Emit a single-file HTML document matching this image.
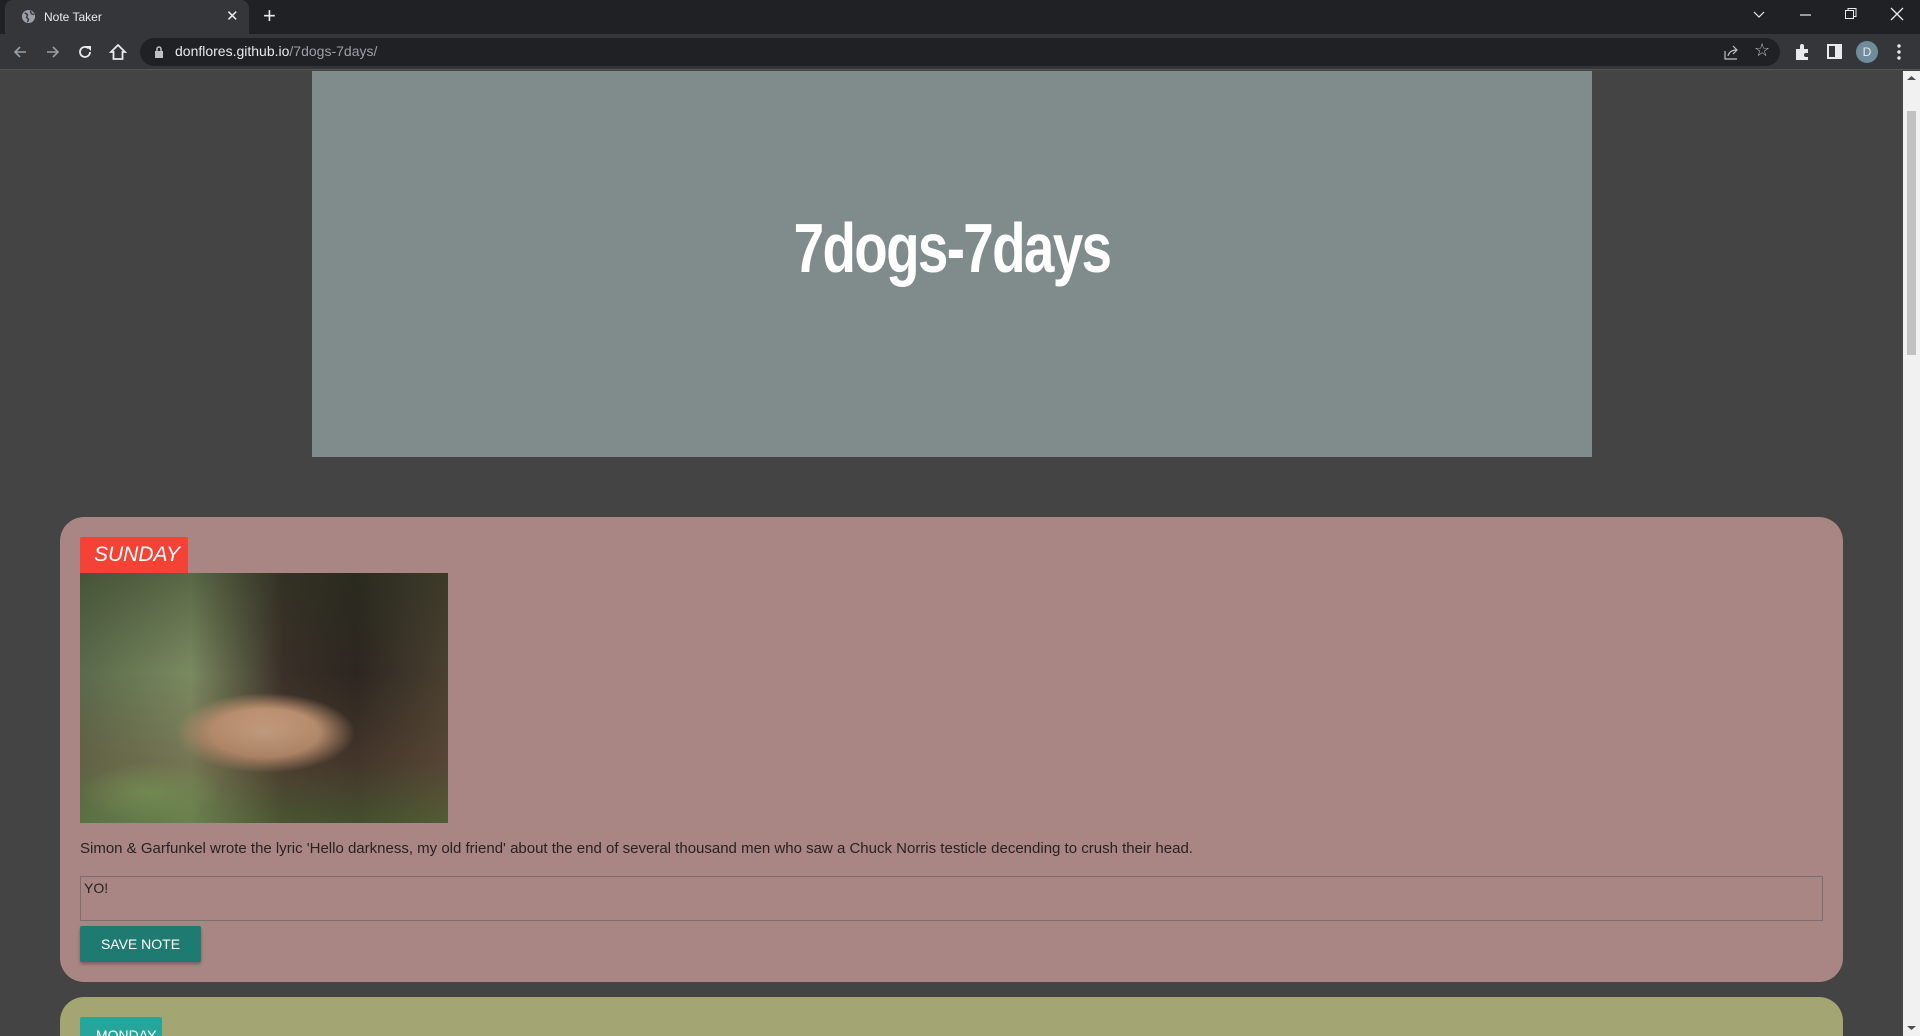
<!DOCTYPE html>
<html style="overflow:hidden;height:1036px"><head><meta charset="utf-8"><style>
*{box-sizing:border-box;margin:0;padding:0}
body{width:1920px;height:1036px;overflow:hidden;background:#444;font-family:"Liberation Sans",sans-serif;position:relative}
.tabbar{position:absolute;left:0;top:0;width:1920px;height:34px;background:#202124}
.tab{position:absolute;left:5px;top:0;width:244px;height:34px;background:#35363a;border-radius:8px 8px 0 0;color:#e8eaed;font-size:12px}
.toolbar{position:absolute;left:0;top:34px;width:1920px;height:36px;background:#35363a;border-bottom:1px solid #555}
.omni{position:absolute;left:140px;top:4px;width:1640px;height:28px;background:#202124;border-radius:14px;color:#e8eaed;font-size:14px}
.ic{position:absolute;color:#e8eaed}
.hero{position:absolute;left:312px;top:71px;width:1280px;height:386px;background:#808c8c}
.hero h1{position:absolute;left:0;right:0;top:144px;text-align:center;color:#fff;font-family:"Liberation Sans",sans-serif;font-weight:bold;font-size:66px;letter-spacing:-2px;line-height:66px;transform:scale(0.83,1.05)}
.card{position:absolute;left:60px;width:1783px;border-radius:24px}
.tag{position:absolute;left:20px;color:#fff;font-size:21px;padding:0 14px;height:36px;line-height:36px;border-radius:2px 2px 0 0}
.scroll{position:absolute;left:1903px;top:71px;width:17px;height:965px;background:#f1f1f1}
</style></head><body>
<div class="tabbar">
 <div class="tab">
  <svg style="position:absolute;left:16px;top:9px" width="15" height="15" viewBox="0 0 16 16"><circle cx="8" cy="8" r="7" fill="#9aa0a6"/><path d="M4 4l3 2-1 3 2 2-1 3M10 2l1 3 3 1" stroke="#35363a" stroke-width="1.5" fill="none"/></svg>
  <span style="position:absolute;left:39px;top:10px">Note Taker</span>
  <span style="position:absolute;left:221px;top:7px;font-size:15px">✕</span>
 </div>
 <span class="ic" style="left:263px;top:3px;font-size:22px">+</span>
 <svg class="ic" style="left:1752px;top:9px" width="14" height="10"><path d="M2 3l5 5 5-5" stroke="#e8eaed" fill="none" stroke-width="1.2"/></svg>
 <svg class="ic" style="left:1799px;top:8px" width="14" height="14"><path d="M1 7h11" stroke="#e8eaed" stroke-width="1.2"/></svg>
 <svg class="ic" style="left:1844px;top:7px" width="14" height="14"><rect x="1.5" y="3.5" width="8" height="8" stroke="#e8eaed" fill="none"/><path d="M4 3.5V1.5h8v8h-2" stroke="#e8eaed" fill="none"/></svg>
 <svg class="ic" style="left:1890px;top:7px" width="14" height="14"><path d="M1 1l12 12M13 1L1 13" stroke="#e8eaed" stroke-width="1.3"/></svg>
</div>
<div class="toolbar">
 <svg class="ic" style="left:12px;top:10px" width="16" height="16"><path d="M14 8H3M8 3L3 8l5 5" stroke="#9aa0a6" stroke-width="1.6" fill="none"/></svg>
 <svg class="ic" style="left:45px;top:10px" width="16" height="16"><path d="M2 8h11M8 3l5 5-5 5" stroke="#9aa0a6" stroke-width="1.6" fill="none"/></svg>
 <svg class="ic" style="left:77px;top:10px" width="16" height="16"><path d="M13 8a5 5 0 1 1-1.5-3.6" stroke="#e8eaed" stroke-width="1.8" fill="none"/><path d="M9 2h5v5z" fill="#e8eaed"/></svg>
 <svg class="ic" style="left:109px;top:9px" width="18" height="18"><path d="M9 2L2 9h2.5v7h9V9H16z" stroke="#e8eaed" stroke-width="1.8" fill="none"/></svg>
 <div class="omni">
  <svg style="position:absolute;left:14px;top:8px" width="10" height="12"><rect x="1" y="5" width="8" height="7" fill="#bdc1c6"/><path d="M3 5V3a2 2 0 0 1 4 0v2" stroke="#bdc1c6" fill="none" stroke-width="1.5"/></svg>
  <span style="position:absolute;left:35px;top:5px">donflores.github.io<span style="color:#9aa0a6">/7dogs-7days/</span></span>
  <svg style="position:absolute;left:1583px;top:5px" width="18" height="18"><path d="M2 8v8h12M5 13c1-4 4-6 9-6M10 3l4 4-4 4" stroke="#bdc1c6" fill="none" stroke-width="1.2"/></svg>
  <span style="position:absolute;left:1614px;top:2px;font-size:18px;color:#bdc1c6">☆</span>
 </div>
 <svg class="ic" style="left:1793px;top:9px" width="18" height="18"><path d="M3 6h4V3a2 2 0 0 1 4 0v3h4v4h-2a2 2 0 0 0 0 4h2v3H3z" fill="#e8eaed"/></svg>
 <svg class="ic" style="left:1827px;top:10px" width="16" height="16"><rect x="1" y="1" width="13" height="13" stroke="#e8eaed" stroke-width="2" fill="none"/><rect x="8" y="1" width="6" height="13" fill="#e8eaed"/></svg>
 <div style="position:absolute;left:1856px;top:7px;width:22px;height:22px;border-radius:50%;background:#6f8b9c;color:#e8eaed;font-size:12px;text-align:center;line-height:22px">D</div>
 <svg class="ic" style="left:1896px;top:9px" width="6" height="18"><circle cx="3" cy="3" r="1.7" fill="#e8eaed"/><circle cx="3" cy="9" r="1.7" fill="#e8eaed"/><circle cx="3" cy="15" r="1.7" fill="#e8eaed"/></svg>
</div>
<div class="hero"><h1>7dogs-7days</h1></div>

<div class="card" style="top:517px;height:465px;background:#a98684">
 <div class="tag" style="top:20px;left:20px;width:108px;background:#f44336;font-style:italic">SUNDAY</div>
 <div style="position:absolute;left:20px;top:56px;width:368px;height:250px;background:
  radial-gradient(ellipse 90px 40px at 185px 160px,#d8b090 0,#c89a78 60%,transparent 100%),
  radial-gradient(ellipse 70px 30px at 70px 220px,#7ea060 0,transparent 100%),
  linear-gradient(90deg,#5a6a4a 0,#7a8a60 30%,#3a3028 55%,#2c2620 75%,#4a4030 100%);"></div>
 <div style="position:absolute;left:20px;top:56px;width:368px;height:250px;background:linear-gradient(180deg,rgba(40,50,30,.4) 0,transparent 40%,rgba(110,80,60,.35) 75%,rgba(90,120,60,.5) 100%)"></div>
 <p style="position:absolute;left:20px;top:323px;font-size:15px;color:#2a2020">Simon &amp; Garfunkel wrote the lyric 'Hello darkness, my old friend' about the end of several thousand men who saw a Chuck Norris testicle decending to crush their head.</p>
 <div style="position:absolute;left:20px;top:359px;width:1743px;height:45px;border:1px solid #7a6e6e;font-size:14px;color:#222;padding:3px 3px">YO!</div>
 <div style="position:absolute;left:20px;top:409px;width:121px;height:36px;background:#1f7b72;color:#fff;font-size:14px;text-align:center;line-height:36px;border-radius:2px;box-shadow:0 2px 3px rgba(0,0,0,.3)">SAVE NOTE</div>
</div>
<div class="card" style="top:997px;height:39px;border-radius:24px 24px 0 0;background:#a3a673;overflow:hidden">
 <div class="tag" style="top:20px;left:20px;width:82px;background:#26a69a;font-size:14px;padding:0 16px">MONDAY</div>
</div>
<div class="scroll"><div style="position:absolute;left:4px;top:40px;width:9px;height:244px;background:#c1c1c1"></div>
<svg style="position:absolute;left:4px;top:4px" width="9" height="6"><path d="M0 5l4.5-4 4.5 4z" fill="#505050"/></svg>
<svg style="position:absolute;left:4px;top:954px" width="9" height="6"><path d="M0 1l4.5 4 4.5-4z" fill="#505050"/></svg></div>
</body></html>
